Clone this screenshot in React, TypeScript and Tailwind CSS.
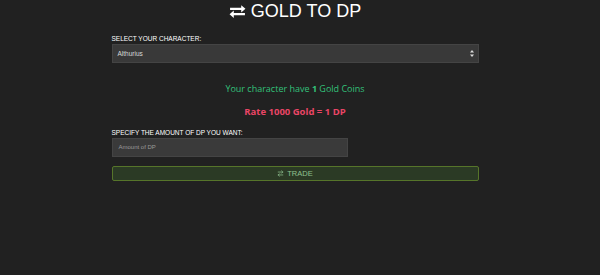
import { ArrowRightLeft } from 'lucide-react';

const ExchangeIcon = ({ size }: { size: number }) => (
  <svg width={size} height={size} viewBox="0 0 16 16" fill="currentColor">
    <path d="M1 4.5h10.5V2l4 3.5-4 3.5V6.5H1z" />
    <path d="M15 11.5H4.5V14l-4-3.5 4-3.5v2.5H15z" />
  </svg>
);

const App = () => {
  return (
    <div className="w-[600px] h-[275px] bg-[#212121] overflow-hidden" style={{ fontFamily: '"Liberation Sans", Arial, sans-serif' }}>
      <div className="w-[590px]">
        <div className="mx-auto w-[367px]">
          <h1 className="flex items-center justify-center gap-[5px] text-white text-[18px] leading-[22px]">
            <ExchangeIcon size={17} />
            <span>GOLD TO DP</span>
          </h1>

          <label className="block mt-[12px] text-[6.5px] leading-[9px] text-white uppercase">
            Select your character:
          </label>
          <div className="mt-[1px] h-[19px] bg-[#393939] border border-[#444444] flex items-center justify-between pl-[5px] pr-[4px]">
            <span className="text-[6.5px] text-[#d8d8d8]">Althurius</span>
            <svg width="4" height="7" viewBox="0 0 4 7" fill="#dddddd">
              <path d="M2 0l2 2.6H0z" />
              <path d="M2 7l2-2.6H0z" />
            </svg>
          </div>

          <p className="mt-[19px] text-center text-[9px] leading-[14px] text-[#33c07a]" style={{ fontFamily: '"Open Sans", sans-serif' }}>
            Your character have <b>1</b> Gold Coins
          </p>
          <p className="mt-[9px] text-center text-[9.5px] leading-[14px] font-bold text-[#ea4566]" style={{ fontFamily: '"Open Sans", sans-serif' }}>
            Rate 1000 Gold = 1 DP
          </p>

          <label className="block mt-[9px] text-[6.5px] leading-[9px] text-white uppercase">
            Specify the amount of DP you want:
          </label>
          <div className="mt-[1px] w-[236px] h-[19px] bg-[#3a3a3a] border border-[#444444] flex items-center pl-[6px]">
            <span className="text-[6px] text-[#9a9a9a]">Amount of DP</span>
          </div>

          <button className="mt-[9px] w-full h-[15px] bg-[#2b3a25] border border-[#56752a] rounded-[2px] flex items-center justify-center gap-[3px] text-[#8fc08f] text-[7.5px]">
            <ArrowRightLeft size={7} strokeWidth={2.5} />
            <span>TRADE</span>
          </button>
        </div>
      </div>
    </div>
  );
};

export default App;
